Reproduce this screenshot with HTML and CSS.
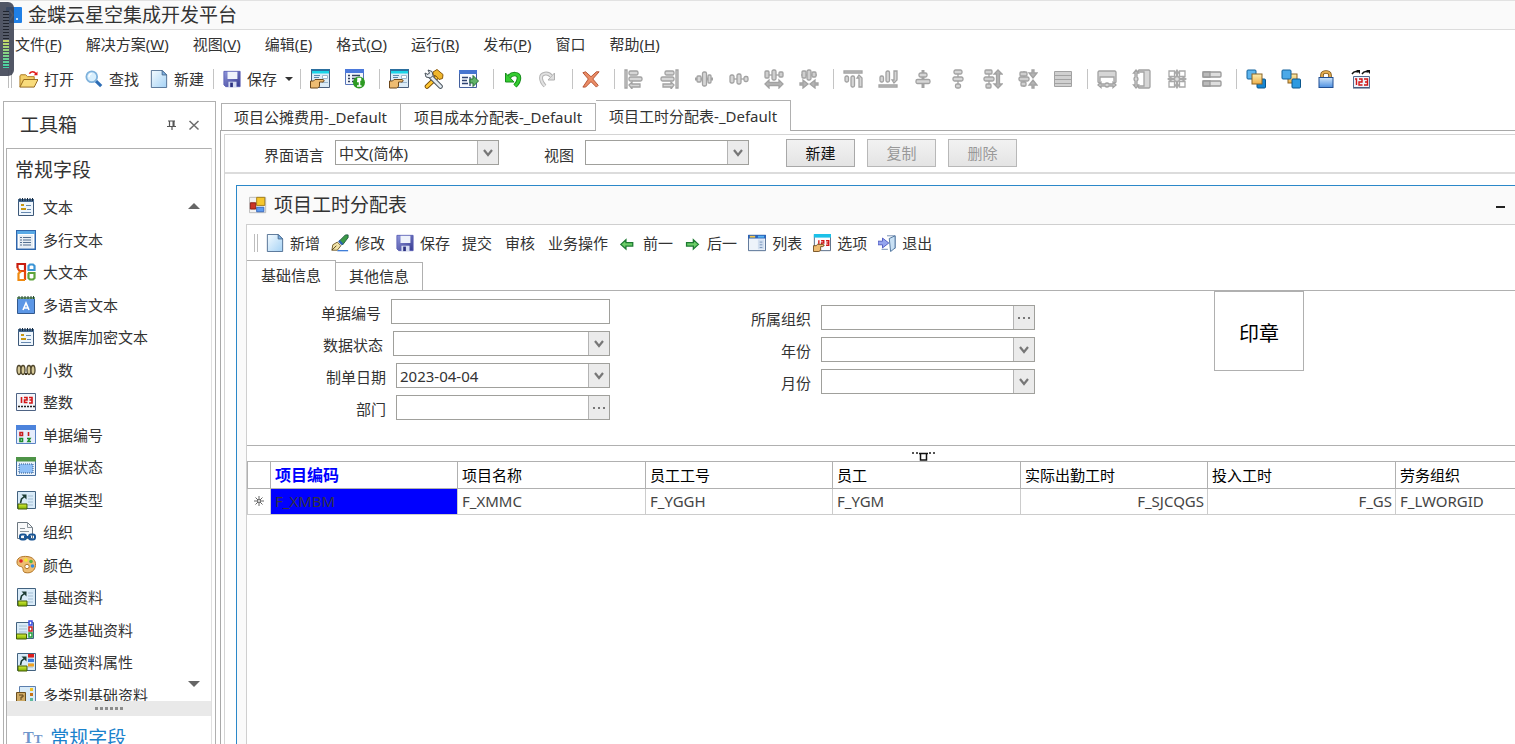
FILE: index.html
```html
<!DOCTYPE html>
<html lang="zh-CN">
<head>
<meta charset="utf-8">
<title>金蝶云星空集成开发平台</title>
<link rel="stylesheet" href="styles.css">
</head>
<body>
<svg class="defs" aria-hidden="true">
  <defs>
    <linearGradient id="gPage" x1="0" y1="0" x2="1" y2="1"><stop offset="0" stop-color="#f4fbff"/><stop offset="1" stop-color="#a5d2f5"/></linearGradient>
    <linearGradient id="gBlue" x1="0" y1="0" x2="0" y2="1"><stop offset="0" stop-color="#cfe6fb"/><stop offset="1" stop-color="#4d8fe0"/></linearGradient>
    <linearGradient id="gSave" x1="0" y1="0" x2="1" y2="1"><stop offset="0" stop-color="#8f96dc"/><stop offset="1" stop-color="#35398f"/></linearGradient>
    <linearGradient id="gGold" x1="0" y1="0" x2="0" y2="1"><stop offset="0" stop-color="#fdeeb0"/><stop offset="1" stop-color="#eeb04a"/></linearGradient>
    <linearGradient id="gLime" x1="0" y1="0" x2="0" y2="1"><stop offset="0" stop-color="#d6ef3c"/><stop offset="1" stop-color="#7fae00"/></linearGradient>
  </defs>
  <symbol id="open" viewBox="0 0 20 20"><path d="M1 18V6l1-1h5l2 2h7v3" fill="#f3cf68" stroke="#a9761c"/><path d="M1 18l4-8h15l-4 8z" fill="#f9dc7c" stroke="#94661a"/><path d="M11 4c1-3 5-3 7 0" fill="none" stroke="#e01818" stroke-width="1.6"/><path d="M15.500 5.500h4V1.500z" fill="#e01818"/></symbol>
  <symbol id="find" viewBox="0 0 20 20"><path d="M12 12l6 6" stroke="#2d6db5" stroke-width="3.500"/><circle cx="7.500" cy="7.500" r="6" fill="#d8effd" stroke="#7fb2dc" stroke-width="2"/><path d="M4.500 8a3.500 3.500 0 0 1 3-4" fill="none" stroke="#fff" stroke-width="1.500"/></symbol>
  <symbol id="new" viewBox="0 0 20 20"><path d="M1.500.500h12l5 5v14h-17z" fill="url(#gPage)" stroke="#48688c"/><path d="M13.500.500v5h5z" fill="#7db4e8" stroke="#48688c"/></symbol>
  <symbol id="save" viewBox="0 0 20 20"><path d="M1 1.500h18v17H3l-2-2z" fill="url(#gSave)" stroke="#5a5fb4"/><path d="M5 2h11v8H5z" fill="#eef2fb"/><path d="M6 13h9v6H6z" fill="#d5dcf2"/><path d="M8 14h3v5H8z" fill="#2c3180"/></symbol>
  <symbol id="formhand" viewBox="0 0 20 20"><path d="M1.500.500h18v18h-18z" fill="#dcecf7" stroke="#4a5f7c"/><path d="M1 0h19v2H1z" fill="#2c6f9e"/><path d="M2 2h17v2.500H2z" fill="#1bd5e8"/><path d="M4 6.500h6M4 8.500h5" stroke="#5d88ad"/><path d="M12.500 6.500h5v3h-5z" fill="#fff" stroke="#9bb8cf"/><path d="M12 13.500h6" stroke="#9bb8cf"/><path d="M.5 12h3l1.500-1.500h8c1.500.5 1.500 2 0 2.500H9.500v4.500l-2 1.500h-7z" fill="#eebc72" stroke="#6d4719"/></symbol>
  <symbol id="forminfo" viewBox="0 0 20 20"><path d="M.5.500h18v15H.5z" fill="#f3f6fc" stroke="#5874b8"/><path d="M0 0h19v4H0z" fill="#4b79dc"/><path d="M3 6.500h2m2 0h8M3 9.500h2m2 0h5M3 12.500h2m2 0h3" stroke="#33415d" stroke-width="1.300"/><circle cx="14" cy="13.500" r="6" fill="#2c9a22"/><path d="M13 9.500h2.500v1.500H13zM12 12.500h2.500v4M12 17h4.500" stroke="#fff" stroke-width="1.500" fill="none"/></symbol>
  <symbol id="tools" viewBox="0 0 20 20"><path d="M3 17.500L14 7" stroke="#7a4f08" stroke-width="4.600" stroke-linecap="round"/><path d="M3 17.500L14 7" stroke="#ffc732" stroke-width="2.800" stroke-linecap="round"/><path d="M9 3l4-2.500 6 5-.5 4-3.500 1L12 7l-3-1z" fill="#efb62c" stroke="#8a5a0c"/><path d="M5.500 6.500l11 11" stroke="#4a535c" stroke-width="4.600" stroke-linecap="round"/><path d="M5.500 6.500l11 11" stroke="#e4ecf2" stroke-width="2.800" stroke-linecap="round"/><path d="M1 4l3 1.500L5.500 4 4 1l4 1.500 1 4L6.500 9 2 8z" fill="#e7edf1" stroke="#4a535c"/></symbol>
  <symbol id="formgo" viewBox="0 0 20 20"><path d="M.5 1.500h17v17H.5z" fill="#f6f9ff" stroke="#425f9d"/><path d="M0 1h18v4H0z" fill="#4675d0"/><path d="M3 8.500h6M3 11.500h5M3 14.500h6M11 8v9" stroke="#2f4372" stroke-width="1.300"/><path d="M11 10h3V6.500l5.500 5.500-5.500 5.500V14h-3z" fill="#62b46a" stroke="#267334"/></symbol>
  <symbol id="undo" viewBox="0 0 20 20"><path d="M6 8c3-4 10-4 10 1 0 3-2 6-4 8" fill="none" stroke="#188c1d" stroke-width="4.500"/><path d="M2.500 4v9H11z" fill="#35cc31" stroke="#188c1d"/><path d="M6 8c3-4 10-4 10 1 0 3-2 6-4 8" fill="none" stroke="#35cc31" stroke-width="2.600"/></symbol>
  <symbol id="redo" viewBox="0 0 20 20"><path d="M13 7C10 3 3 4 3 9c0 3 2 6 4 8" fill="none" stroke="#b3b3b3" stroke-width="3.800"/><path d="M16.500 4v7H10z" fill="#dedede" stroke="#b0b0b0"/><path d="M13 7C10 3 3 4 3 9c0 3 2 6 4 8" fill="none" stroke="#e2e2e2" stroke-width="2"/></symbol>
  <symbol id="del" viewBox="0 0 20 20"><path d="M1 3l3-1 6 5.500L16 2h3l-7 8 6 7-2 2-6-6-6 6H1l6-9z" fill="#ea8d66" stroke="#b04c2c"/></symbol>
  <symbol id="a1" viewBox="0 0 20 20"><g fill="#d6d6d6" stroke="#a2a2a2" stroke-width="1.300"><path d="M1 1h2v18H1z"/><rect x="5" y="2" width="9" height="4" rx="1.500"/><rect x="5" y="8" width="13" height="4" rx="1.500"/><path d="M5 16l3-3v2h8v3H8v2z"/></g></symbol>
  <symbol id="a2" viewBox="0 0 20 20"><use href="#a1" transform="matrix(-1 0 0 1 20 0)" width="20" height="20"/></symbol>
  <symbol id="a3" viewBox="0 0 20 20"><g fill="#d6d6d6" stroke="#a2a2a2" stroke-width="1.300"><path d="M1 10h18" stroke-width="3"/><rect x="3" y="7" width="4" height="6" rx="1"/><rect x="8.500" y="3" width="4" height="14" rx="1.500"/><rect x="14" y="6" width="3" height="8" rx="1"/></g></symbol>
  <symbol id="a4" viewBox="0 0 20 20"><g fill="#d6d6d6" stroke="#a2a2a2" stroke-width="1.300"><path d="M1 10h18"/><rect x="1" y="6" width="4" height="8" rx="1.500"/><rect x="8" y="5" width="4" height="10" rx="1.500"/><rect x="15" y="7.500" width="4" height="5" rx="1.500"/></g></symbol>
  <symbol id="a5" viewBox="0 0 20 20"><g fill="#cfcfcf" stroke="#a2a2a2" stroke-width="1.300"><path d="M1 6h18"/><rect x="1" y="2" width="4" height="7" rx="1"/><rect x="8" y="1" width="4" height="10" rx="1.500"/><rect x="15" y="3" width="4" height="5" rx="1"/><path d="M1 15l4-4v2.500h10V11l4 4-4 4v-2.500H5V19z" fill="#b4b4b4"/></g></symbol>
  <symbol id="a6" viewBox="0 0 20 20"><g fill="#cfcfcf" stroke="#a2a2a2" stroke-width="1.300"><path d="M2 6h16"/><rect x="3" y="2" width="4" height="7" rx="1"/><rect x="8" y="1" width="4" height="10" rx="1.500"/><rect x="13" y="3" width="4" height="5" rx="1"/><path d="M1 14h3v-3l5 4-5 4v-3H1zM19 14h-3v-3l-5 4 5 4v-3h3z" fill="#b4b4b4"/></g></symbol>
  <symbol id="b1" viewBox="0 0 20 20"><g fill="#d6d6d6" stroke="#a2a2a2" stroke-width="1.300"><path d="M1 2h18v2H1z"/><rect x="2" y="7" width="3.500" height="6" rx="1.500"/><rect x="8" y="7" width="3.500" height="11" rx="1.500"/><path d="M14 9l2-3 3 3v9h-3V9z"/></g></symbol>
  <symbol id="b2" viewBox="0 0 20 20"><use href="#b1" transform="matrix(1 0 0 -1 0 20)" width="20" height="20"/></symbol>
  <symbol id="b3" viewBox="0 0 20 20"><g fill="#d6d6d6" stroke="#a2a2a2" stroke-width="1.300"><path d="M10 1v18" stroke-width="3"/><rect x="6" y="4" width="8" height="4" rx="1.500"/><rect x="3" y="10.500" width="14" height="4" rx="1.500"/></g></symbol>
  <symbol id="b4" viewBox="0 0 20 20"><use href="#a4" transform="rotate(90 10 10)" width="20" height="20"/></symbol>
  <symbol id="b5" viewBox="0 0 20 20"><use href="#a5" transform="matrix(0 1 1 0 0 0)" width="20" height="20"/></symbol>
  <symbol id="b6" viewBox="0 0 20 20"><use href="#a6" transform="matrix(0 1 1 0 0 0)" width="20" height="20"/></symbol>
  <symbol id="b7" viewBox="0 0 20 20"><path d="M1.500 2.500h17v15h-17z" fill="#d0d0d0" stroke="#a2a2a2"/><path d="M2 6.500h16M2 10.500h16M2 14.500h16" stroke="#a2a2a2"/></symbol>
  <symbol id="c1" viewBox="0 0 20 20"><g fill="#d6d6d6" stroke="#a2a2a2" stroke-width="1.300"><path d="M2 2h16l1 1v10l-2 2v-7H3v7l-2-2V3z"/><path d="M1 16l3-2.500v1.500h4a2.500 2.500 0 0 1 4 0h4v-1.500l3 2.500-3 2.500V17h-4a2.500 2.500 0 0 1-4 0H4v1.500z"/></g></symbol>
  <symbol id="c2" viewBox="0 0 20 20"><use href="#c1" transform="rotate(90 10 10)" width="20" height="20"/></symbol>
  <symbol id="c3" viewBox="0 0 20 20"><g fill="#fff" stroke="#a8a8a8" stroke-width="1.300"><path d="M2 2h5.500v5.500H2zM12.500 2H18v5.500h-5.500zM2 12.500h5.500V18H2zM12.500 12.500H18V18h-5.500z"/><path d="M3 10h14M10 3v14" stroke-width="2.500"/><path d="M10 1l2 3H8zM10 19l2-3H8zM1 10l3-2v4zM19 10l-3-2v4z" fill="#a8a8a8"/><circle cx="10" cy="10" r="2.500" fill="#ddd"/></g></symbol>
  <symbol id="c4" viewBox="0 0 20 20"><g fill="#dedede" stroke="#999" stroke-width="1.300"><rect x="1" y="3" width="18" height="5" rx="1"/><rect x="1" y="12" width="18" height="5" rx="1"/><path d="M1 3h7v5H1zM1 12h7v5H1z" fill="#bbb"/></g></symbol>
  <symbol id="front" viewBox="0 0 20 20"><rect x="1" y="1" width="9" height="9" rx="1" fill="#5db5ee" stroke="#14629c"/><rect x="11" y="10" width="8.500" height="9" rx="1" fill="#1686d2" stroke="#0b568c"/><rect x="6" y="5" width="10" height="10" fill="url(#gGold)" stroke="#8a6427"/></symbol>
  <symbol id="back" viewBox="0 0 20 20"><rect x="7" y="5" width="9" height="9" fill="url(#gGold)" stroke="#8a6427"/><rect x="1" y="1" width="9" height="9" rx="1" fill="#4ba9e8" stroke="#14629c"/><rect x="11" y="10" width="8.500" height="9" rx="1" fill="#2d9ae0" stroke="#0b568c"/></symbol>
  <symbol id="lock" viewBox="0 0 20 20"><path d="M6 9V6c0-4 8-4 8 0v3" fill="none" stroke="#7c5415" stroke-width="3.600"/><path d="M6 9V6c0-4 8-4 8 0v3" fill="none" stroke="#e3ad51" stroke-width="1.800"/><rect x="3" y="8.500" width="14" height="10" fill="url(#gBlue)" stroke="#214f93"/></symbol>
  <symbol id="num" viewBox="0 0 20 20"><path d="M2.500 7.500h16v11h-16z" fill="#eef3fa" stroke="#526b90"/><path d="M2 19h17" stroke="#3b5070"/><path d="M1 5c2-3 4-3 6-2M11 5c2-3 4-3 6-2" fill="none" stroke="#111" stroke-width="1.500"/><path d="M5 1h4v4zM15 1h4v4z" fill="#111"/><path d="M4 10h1.500v6M8 10h3v3H8v3h3.500M13 10h3.500v6H13M14 13h2" fill="none" stroke="#d01616" stroke-width="1.400"/></symbol>
  <symbol id="notepad" viewBox="0 0 20 20"><path d="M2.500 3.500h15v15h-15z" fill="#eef6fd" stroke="#3d5878"/><path d="M2 2h16v3H2z" fill="#44688f"/><path d="M4 1v3M6.500 1v3M9 1v3M11.500 1v3M14 1v3M16.500 1v3" stroke="#15293f"/><path d="M5 8h3M5 12h5" stroke="#c79712" stroke-width="2"/><path d="M10 8.500h5M11 12.500h4M5 15.500h10" stroke="#6688ae"/></symbol>
  <symbol id="multiline" viewBox="0 0 20 20"><path d="M.75.750h18.500v18.500H.75z" fill="#fff" stroke="#2f66ac" stroke-width="1.500"/><path d="M1 1h18v3H1z" fill="#58a9e6"/><path d="M3 5h14v13H3z" fill="#e8eef4"/><path d="M4 7.500h2m1 0h8M4 10h2m1 0h8M4 12.500h2m1 0h8M4 15h2m1 0h8" stroke="#546f90"/></symbol>
  <symbol id="bigtext" viewBox="0 0 20 20"><g fill="none" stroke-width="2.200"><path d="M1.500 6V2h7.500v6" stroke="#c81e10"/><path d="M1.500 6l2 3H9v9" stroke="#e5490f"/><path d="M5 9.500l-2.500 2V18H9" stroke="#f08a10"/><path d="M12.500 9V4l1.500-1.500h3L18.500 4v4H12" stroke="#3c95d6"/><path d="M12.500 11v5l1.500 1.500h3l1.500-1.500v-5H12" stroke="#5fa43c"/></g></symbol>
  <symbol id="lang" viewBox="0 0 20 20"><path d="M1.500 3.500h17v15h-17z" fill="#5c97e6" stroke="#31588e"/><path d="M1 2h18v2H1z" fill="#6f9e73"/><path d="M3 1v3M6 1v3M9 1v3M12 1v3M15 1v3M17.500 1v3" stroke="#27452e"/><path d="M7 15l3-7 3 7M8 13h4" fill="none" stroke="#fff" stroke-width="1.600"/></symbol>
  <symbol id="decimal" viewBox="0 0 20 20"><g fill="#d5c897" stroke="#50472e" stroke-width="1.300"><ellipse cx="3" cy="10" rx="2" ry="4.500"/><ellipse cx="7" cy="10" rx="2" ry="4.500"/><ellipse cx="13" cy="10" rx="2" ry="4.500"/><ellipse cx="17" cy="10" rx="2" ry="4.500"/></g><path d="M9 13h2v2H9z" fill="#3e3621"/></symbol>
  <symbol id="int" viewBox="0 0 20 20"><path d="M.5 1.500h19v17H.5z" fill="#f3f6fb" stroke="#4e6384"/><path d="M5.500 5v6M8 5.500h3v2.500H8.500v2.500h3M13 5.500h3V11h-3M13.500 8H16" fill="none" stroke="#d21616" stroke-width="1.600"/><path d="M2 14.500h17" stroke="#222" stroke-width="1.500" stroke-dasharray="2 1"/></symbol>
  <symbol id="billno" viewBox="0 0 20 20"><path d="M.5.500h19v18H.5z" fill="#e6edfc" stroke="#5a83c4"/><path d="M0 0h20v5H0z" fill="#4c83dc"/><path d="M4 7.500h2.500v3H4zM12.500 7v4" fill="none" stroke="#c71d1d" stroke-width="1.600"/><path d="M4 13.500h2.500v3H4zM11 13.500h3l-2 3h3" fill="none" stroke="#1c8c2c" stroke-width="1.600"/></symbol>
  <symbol id="status" viewBox="0 0 20 20"><path d="M.5.500h19v18H.5z" fill="#e9f2fb" stroke="#416a9c"/><path d="M0 0h20v4.500H0z" fill="#4e9447"/><path d="M3 7h14v9H3z" fill="#8fc0f8" stroke="#2f5686" stroke-dasharray="1 1"/></symbol>
  <symbol id="basic" viewBox="0 0 20 20"><path d="M1.500 1.500h18v17h-18z" fill="#d9ebf8" stroke="#42627f"/><path d="M12 6h5M12 9h5M12 12h5M12 15h5" stroke="#a3bdd3"/><path d="M4.500 13l1-4 3-2.500" fill="none" stroke="#1c3c33" stroke-width="1.600"/><path d="M5.500 4.500h5v5z" fill="#1c3c33"/><path d="M2 14h9v5H2z" fill="url(#gLime)" stroke="#425c06"/></symbol>
  <symbol id="org" viewBox="0 0 20 20"><path d="M1.500.500h10l5 5v11h-15z" fill="#f8f9fa" stroke="#6c7780"/><path d="M11.500.500v5h5M4 6.500h5M4 9.500h9" fill="none" stroke="#8b949b"/><g fill="none" stroke="#195595" stroke-width="2"><rect x="4" y="12.500" width="6" height="5" rx="2"/><rect x="13" y="12.500" width="6" height="5" rx="2"/><path d="M8 15h7"/></g></symbol>
  <symbol id="color" viewBox="0 0 20 20"><path d="M1 7c0-5 6-6 10-5.500 6 .5 9 4 8.500 9S15 19 9 17.500C6 16.500 8 14 6 12c-1-1-5 0-5-5z" fill="#eebd72" stroke="#b27526"/><circle cx="5" cy="6" r="1.800" fill="#e02424"/><circle cx="10" cy="5" r="1.800" fill="#f6ea28"/><circle cx="15" cy="6.500" r="1.800" fill="#58b63e"/><circle cx="16.500" cy="11" r="1.800" fill="#328ae0"/><circle cx="11" cy="11.500" r="2.200" fill="#fff" stroke="#b27526"/></symbol>
  <symbol id="multi" viewBox="0 0 20 20"><path d="M.5 2.500h17v16H.5z" fill="#d9ebf8" stroke="#42627f"/><path d="M3 6h8M3 9h8M3 12h8" stroke="#a3bdd3"/><path d="M.5 14h10v5H.5z" fill="url(#gLime)" stroke="#425c06"/><g fill="#fff" stroke-width="1.500"><path d="M13 1h3v4h-3z" stroke="#3a4be0"/><path d="M13 7h3v4h-3z" stroke="#d01f1f"/><path d="M13 13h3v4h-3z" stroke="#27a03a"/></g></symbol>
  <symbol id="attr" viewBox="0 0 20 20"><use href="#basic" width="20" height="20"/><path d="M12 2h6v3.500h-6z" fill="#dd1d1d"/><path d="M12 7h6v3h-6z" fill="#3b7be0"/><path d="M12 11.500h6v3h-6z" fill="#f0a322"/></symbol>
  <symbol id="cat" viewBox="0 0 20 20"><path d="M3.500 1.500h16v17h-16z" fill="#d9ebf8" stroke="#5c7fae"/><path d="M14 3h3v3h-3z" fill="#efbf22"/><path d="M14 8h3v3h-3z" fill="#c77218"/><path d="M14 13h3v3h-3z" fill="#5fb99a"/><path d="M.5 7.500h9v11h-9z" fill="#cda964" stroke="#6c5020"/><path d="M3 10h4v2H5v3" fill="none" stroke="#5a431b"/></symbol>
  <symbol id="winform" viewBox="0 0 20 20"><path d="M.5 1.500h18v17H.5z" fill="#f2f2f2" stroke="#b8b8b8"/><path d="M8.500 1.500h9v9h-9z" fill="#f6c62c" stroke="#a27b10"/><path d="M1.500 7.500h6v7h-6z" fill="#cc3426" stroke="#82160e"/><path d="M8.500 12.500h8v5h-8z" fill="#5c9af0" stroke="#3263b8"/></symbol>
  <symbol id="pen" viewBox="0 0 20 20"><path d="M7 18.500h12" stroke="#3f7ed8" stroke-width="1.500"/><path d="M9 8l7-7h3v3l-6 8z" fill="#3b9a46" stroke="#1c5640"/><path d="M9.500 6.500l4 4-1.500 2-4-4z" fill="#2a5fb2"/><path d="M1 18l1-6 5-3 4 4-4 5z" fill="#f2e3a8" stroke="#6c5726"/><path d="M1 18l5-5" stroke="#4b3a15"/></symbol>
  <symbol id="prev" viewBox="0 0 20 20"><path d="M1 11l6-5.500v3.500h8v4H7v3.500z" fill="#6cce68" stroke="#1d7a32" stroke-width="1.500"/></symbol>
  <symbol id="next" viewBox="0 0 20 20"><path d="M17 11l-6-5.500v3.500H3v4h8v3.500z" fill="#6cce68" stroke="#1d7a32" stroke-width="1.500"/></symbol>
  <symbol id="list" viewBox="0 0 20 20"><path d="M.5 1.500h19v17H.5z" fill="#edf3fa" stroke="#47648a"/><path d="M0 1h20v4H0z" fill="#2a62b8"/><path d="M2 2h6v2H2z" fill="#f4c64a"/><path d="M11 2h7v2h-7z" fill="#58b3f2"/><path d="M11 6h7v11h-7z" fill="#d2dff0"/><path d="M13 9h3M13 12h3M13 15h3" stroke="#7693b8"/></symbol>
  <symbol id="opt" viewBox="0 0 20 20"><path d="M1.500.500h18v18h-18z" fill="#fbfcff" stroke="#4a5f7c"/><path d="M1 0h19v4H1z" fill="#1bc0e8"/><path d="M6.500 7v4M9 7.500h3V10h-2.500v2.500h3M14.500 7.500h3v5h-3M15 10h2" fill="none" stroke="#d01616" stroke-width="1.500"/><path d="M.5 13h3l1.500-1.500h6c1.500.5 1.500 2 0 2.500H8.500v4l-2 1.500h-6z" fill="#eebc72" stroke="#6d4719"/></symbol>
  <symbol id="exit" viewBox="0 0 20 20"><path d="M10 2h9v14h-3M4 17h7" fill="none" stroke="#6a86ab"/><path d="M12.500 5L19 2v13.500l-5 4z" fill="#c8e0f4" stroke="#456d98"/><path d="M0 8h5V4.500l7 5.500-7 5.500V12H0z" fill="#94a4ee" stroke="#4956c0"/></symbol>
  <symbol id="chev" viewBox="0 0 12 12"><path d="M2 3l4 5 4-5" fill="none" stroke="#777" stroke-width="2.200"/></symbol>
</svg>

<div class="app">
  <header class="titlebar">
    <svg class="ic16" viewBox="0 0 16 16"><rect width="16" height="16" rx="1" fill="#1f7fe6"/><path d="M4 3l3 5-3 5" fill="none" stroke="#fff" stroke-width="1.500"/><circle cx="11" cy="12" r="1" fill="#fff"/></svg>
    <h1>金蝶云星空集成开发平台</h1>
  </header>
  <div class="meter" aria-hidden="true"><span class="meter-off"></span><span class="meter-on"></span></div>

  <nav class="menu">
    <button>文件(<u>F</u>)</button><button>解决方案(<u>W</u>)</button><button>视图(<u>V</u>)</button><button>编辑(<u>E</u>)</button><button>格式(<u>O</u>)</button><button>运行(<u>R</u>)</button><button>发布(<u>P</u>)</button><button>窗口</button><button>帮助(<u>H</u>)</button>
  </nav>

  <div class="toolbar">
    <span class="grip"></span>
    <div class="group texts files">
      <button><svg class="ic19"><use href="#open"/></svg>打开</button>
      <button><svg class="ic18"><use href="#find"/></svg>查找</button>
      <button><svg class="ic18"><use href="#new"/></svg>新建</button>
    </div>
    <div class="group texts">
      <button><svg class="ic18"><use href="#save"/></svg>保存<span class="caret"></span></button>
    </div>
    <div class="group">
      <button aria-label="表单"><svg class="ic20"><use href="#formhand"/></svg></button>
      <button aria-label="信息"><svg class="ic20"><use href="#forminfo"/></svg></button>
    </div>
    <div class="group">
      <button aria-label="属性"><svg class="ic20"><use href="#formhand"/></svg></button>
      <button aria-label="工具"><svg class="ic20"><use href="#tools"/></svg></button>
      <button aria-label="导出"><svg class="ic20"><use href="#formgo"/></svg></button>
    </div>
    <div class="group">
      <button aria-label="撤销"><svg class="ic20"><use href="#undo"/></svg></button>
      <button aria-label="重做"><svg class="ic20"><use href="#redo"/></svg></button>
    </div>
    <div class="group">
      <button aria-label="删除"><svg class="ic18"><use href="#del"/></svg></button>
    </div>
    <div class="group">
      <button aria-label="左对齐"><svg class="ic20"><use href="#a1"/></svg></button>
      <button aria-label="右对齐"><svg class="ic20"><use href="#a2"/></svg></button>
      <button aria-label="居中"><svg class="ic20"><use href="#a3"/></svg></button>
      <button aria-label="水平间距"><svg class="ic20"><use href="#a4"/></svg></button>
      <button aria-label="增加水平间距"><svg class="ic20"><use href="#a5"/></svg></button>
      <button aria-label="减少水平间距"><svg class="ic20"><use href="#a6"/></svg></button>
    </div>
    <div class="group">
      <button aria-label="顶端对齐"><svg class="ic20"><use href="#b1"/></svg></button>
      <button aria-label="底端对齐"><svg class="ic20"><use href="#b2"/></svg></button>
      <button aria-label="垂直居中"><svg class="ic20"><use href="#b3"/></svg></button>
      <button aria-label="垂直间距"><svg class="ic20"><use href="#b4"/></svg></button>
      <button aria-label="增加垂直间距"><svg class="ic20"><use href="#b5"/></svg></button>
      <button aria-label="减少垂直间距"><svg class="ic20"><use href="#b6"/></svg></button>
      <button aria-label="等行距"><svg class="ic20"><use href="#b7"/></svg></button>
    </div>
    <div class="group">
      <button aria-label="同宽"><svg class="ic20"><use href="#c1"/></svg></button>
      <button aria-label="同高"><svg class="ic20"><use href="#c2"/></svg></button>
      <button aria-label="同大小"><svg class="ic20"><use href="#c3"/></svg></button>
      <button aria-label="标签宽度"><svg class="ic20"><use href="#c4"/></svg></button>
    </div>
    <div class="group">
      <button aria-label="置前"><svg class="ic20"><use href="#front"/></svg></button>
      <button aria-label="置后"><svg class="ic20"><use href="#back"/></svg></button>
      <button aria-label="锁定"><svg class="ic20"><use href="#lock"/></svg></button>
      <button aria-label="顺序"><svg class="ic20"><use href="#num"/></svg></button>
    </div>
  </div>

  <div class="workspace">
    <aside class="sidebar">
      <div class="side-head">
        <h2>工具箱</h2>
        <button aria-label="固定"><svg class="ic12" viewBox="0 0 12 12"><path d="M3.500 2v5M8 2v5M6 7v4M2 2h7M1 7.500h9" fill="none" stroke="#555" stroke-width="1.200"/><path d="M6.500 2H8v5H6.500z" fill="#555"/></svg></button>
        <button aria-label="关闭"><svg class="ic12" viewBox="0 0 12 12"><path d="M1.500 2l9 8.500M10.500 2l-9 8.500" stroke="#6c6c6c" stroke-width="1.500"/></svg></button>
      </div>
      <div class="side-box">
        <h2 class="cat">常规字段</h2>
        <div class="side-scroll">
          <ul>
            <li><svg class="ic20"><use href="#notepad"/></svg>文本</li>
            <li><svg class="ic20"><use href="#multiline"/></svg>多行文本</li>
            <li><svg class="ic20"><use href="#bigtext"/></svg>大文本</li>
            <li><svg class="ic20"><use href="#lang"/></svg>多语言文本</li>
            <li><svg class="ic20"><use href="#notepad"/></svg>数据库加密文本</li>
            <li><svg class="ic20"><use href="#decimal"/></svg>小数</li>
            <li><svg class="ic20"><use href="#int"/></svg>整数</li>
            <li><svg class="ic20"><use href="#billno"/></svg>单据编号</li>
            <li><svg class="ic20"><use href="#status"/></svg>单据状态</li>
            <li><svg class="ic20"><use href="#basic"/></svg>单据类型</li>
            <li><svg class="ic20"><use href="#org"/></svg>组织</li>
            <li><svg class="ic20"><use href="#color"/></svg>颜色</li>
            <li><svg class="ic20"><use href="#basic"/></svg>基础资料</li>
            <li><svg class="ic20"><use href="#multi"/></svg>多选基础资料</li>
            <li><svg class="ic20"><use href="#attr"/></svg>基础资料属性</li>
            <li><svg class="ic20"><use href="#cat"/></svg>多类别基础资料</li>
          </ul>
          <span class="up"></span><span class="down"></span>
        </div>
        <div class="splitter"><i></i><i></i><i></i><i></i><i></i><i></i></div>
        <button class="side-foot"><span class="tt"><b>T</b><small>T</small></span>常规字段</button>
      </div>
    </aside>

    <main class="main">
      <div class="tabs" role="tablist">
        <button role="tab">项目公摊费用-_Default</button><button role="tab">项目成本分配表-_Default</button><button role="tab" class="active" aria-selected="true">项目工时分配表-_Default</button>
      </div>
      <div class="doc">
        <div class="doc-in">
          <div class="langbar">
            <label for="lang-sel">界面语言</label>
            <span class="field w164"><select id="lang-sel"><option>中文(简体)</option></select><span class="btn"><svg class="ic12"><use href="#chev"/></svg></span></span>
            <label for="view-sel" class="second">视图</label>
            <span class="field w164"><select id="view-sel"><option></option></select><span class="btn"><svg class="ic12"><use href="#chev"/></svg></span></span>
            <div class="actions"><button>新建</button><button disabled>复制</button><button disabled>删除</button></div>
          </div>

          <section class="window">
            <div class="win-title"><svg class="ic18"><use href="#winform"/></svg><h2>项目工时分配表</h2><button aria-label="最小化" class="min"><span></span></button></div>
            <div class="win-body">
              <div class="formbar">
                <span class="grip"></span>
                <button><svg class="ic18"><use href="#new"/></svg>新增</button>
                <button><svg class="ic18"><use href="#pen"/></svg>修改</button>
                <button><svg class="ic18"><use href="#save"/></svg>保存</button>
                <button class="plain">提交</button>
                <button class="plain">审核</button>
                <button class="plain">业务操作</button>
                <button><svg class="ic17"><use href="#prev"/></svg>前一</button>
                <button><svg class="ic17"><use href="#next"/></svg>后一</button>
                <button><svg class="ic18"><use href="#list"/></svg>列表</button>
                <button><svg class="ic18"><use href="#opt"/></svg>选项</button>
                <button><svg class="ic18"><use href="#exit"/></svg>退出</button>
              </div>
              <div class="subtabs" role="tablist"><button role="tab" class="active" aria-selected="true">基础信息</button><button role="tab">其他信息</button></div>
              <div class="panel">
                <div class="col left">
                  <div class="row"><label for="f1">单据编号</label><span class="field w219"><input id="f1" type="text"></span></div>
                  <div class="row"><label for="f2">数据状态</label><span class="field w217"><select id="f2"><option></option></select><span class="btn"><svg class="ic12"><use href="#chev"/></svg></span></span></div>
                  <div class="row"><label for="f3">制单日期</label><span class="field w214"><input id="f3" type="text" value="2023-04-04"><button class="btn" aria-label="选择日期"><svg class="ic12"><use href="#chev"/></svg></button></span></div>
                  <div class="row"><label for="f4">部门</label><span class="field w214"><input id="f4" type="text"><button class="btn dots" aria-label="选择部门"><i></i><i></i><i></i></button></span></div>
                </div>
                <div class="col right">
                  <div class="row"><label for="f5">所属组织</label><span class="field w214"><input id="f5" type="text"><button class="btn dots" aria-label="选择组织"><i></i><i></i><i></i></button></span></div>
                  <div class="row"><label for="f6">年份</label><span class="field w214"><select id="f6"><option></option></select><span class="btn"><svg class="ic12"><use href="#chev"/></svg></span></span></div>
                  <div class="row"><label for="f7">月份</label><span class="field w214"><select id="f7"><option></option></select><span class="btn"><svg class="ic12"><use href="#chev"/></svg></span></span></div>
                </div>
                <div class="stamp">印章</div>
              </div>
              <div class="divider"><svg width="24" height="10" viewBox="0 0 24 10"><path d="M1 1h2v2H1zM5 1h2v2H5zM18 1h2v2h-2zM22 1h2v2h-2z" fill="#555"/><path d="M8 2.500h9M9.500 3v6h6V3" fill="none" stroke="#111" stroke-width="1.500"/></svg></div>
              <div class="grid">
                <table>
                  <colgroup><col class="c0"><col class="c2"><col class="c1"><col class="c2"><col class="c1"><col class="c2"><col class="c1"><col class="c1"></colgroup>
                  <thead><tr><th></th><th class="key">项目编码</th><th>项目名称</th><th>员工工号</th><th>员工</th><th>实际出勤工时</th><th>投入工时</th><th>劳务组织</th></tr></thead>
                  <tbody><tr><td class="mark"><svg width="10" height="10" viewBox="0 0 10 10"><path d="M5 0v10M0 5h10M1.500 1.500l7 7M8.500 1.500l-7 7" stroke="#666"/><circle cx="5" cy="5" r="1.500" fill="#fff" stroke="#666"/></svg></td><td class="sel">F_XMBM</td><td>F_XMMC</td><td>F_YGGH</td><td>F_YGM</td><td class="num">F_SJCQGS</td><td class="num">F_GS</td><td>F_LWORGID</td></tr></tbody>
                </table>
              </div>
            </div>
          </section>
        </div>
      </div>
    </main>
  </div>
</div>
</body>
</html>
```

FILE: styles.css
```css
* { box-sizing: border-box; }
body {
  margin: 0;
  background: #fff;
  color: #333;
  font: 15px/20px "Noto Sans", "Noto Sans CJK SC", sans-serif;
  overflow: hidden;
}
button, input, select { font: inherit; color: inherit; margin: 0; }
button { background: none; border: 0; padding: 0; white-space: nowrap; }
h1, h2 { margin: 0; font-size: 19px; font-weight: 400; line-height: 26px; white-space: nowrap; }
svg { display: block; flex: none; }
.defs { position: absolute; width: 0; height: 0; }
.ic12 { width: 12px; height: 12px; }
.ic16 { width: 16px; height: 18px; }
.ic17 { width: 17px; height: 17px; }
.ic18 { width: 18px; height: 18px; }
.ic19 { width: 19px; height: 19px; }
.ic20 { width: 20px; height: 20px; }

.app { display: flex; flex-direction: column; height: 100vh; position: relative; }
.titlebar {
  display: flex; align-items: center; gap: 6px; flex: none;
  height: 30px; padding-left: 6px;
  background: #fafafa; border-top: 1px solid #e2e2e2; border-bottom: 1px solid #dcdcdc;
}
.meter {
  position: absolute; left: 0; top: 2px; z-index: 2;
  display: flex; flex-direction: column;
  width: 14px; height: 74px; padding: 9px 5px 8px 3px;
  background: rgba(62, 68, 84, .9); border-radius: 0 6px 6px 0;
}
.meter-off { flex: 1; background: repeating-linear-gradient(#20242e 0 1px, #555b69 1px 3px); }
.meter-on { flex: 1; background: repeating-linear-gradient(transparent 0 2px, #454b5b 2px 3px), linear-gradient(#c9d865, #3fd0a8); }

.menu { display: flex; align-items: center; gap: 24px; flex: none; height: 30px; padding: 0 0 2px 15px; }

.toolbar { display: flex; align-items: center; flex: none; height: 38px; padding-left: 8px; }
.grip { flex: none; width: 4px; height: 18px; border: solid #bdbdbd; border-width: 0 1px; }
.group { display: flex; flex: none; align-items: center; gap: 15px; height: 20px; padding: 0 14px 0 9px; border-right: 1px solid #c4c4c4; }
.group:last-child { border-right: 0; }
.group button, .formbar button { display: flex; align-items: center; gap: 6px; }
.texts { gap: 11px; padding: 0 7px 0 9px; }
.files { padding: 0 9px 0 7px; }
.caret { border: 4px solid transparent; border-top-color: #333; border-bottom: 0; margin-left: 2px; }

.workspace { display: flex; flex: 1; min-height: 0; }
.sidebar {
  display: flex; flex-direction: column; flex: none;
  width: 213px; margin: 3px 4px 0 3px;
  border: 1px solid #b0b0b0; border-bottom: 0;
}
.side-head { display: flex; align-items: center; gap: 10px; flex: none; height: 46px; padding: 0 15px 0 16px; }
.side-head h2 { flex: 1; }
.side-box { display: flex; flex-direction: column; flex: 1; min-height: 0; margin: 0 3px 0 2px; border: 1px solid #b0b0b0; border-right-color: #e0e0e0; border-bottom: 0; }
.cat { flex: none; padding-left: 8px; line-height: 42px; }
.side-scroll { flex: 1; min-height: 0; overflow: hidden; position: relative; }
.side-scroll ul { display: grid; grid-auto-rows: 1fr; height: 520px; margin: 0; padding: 0 0 0 9px; list-style: none; }
.side-scroll li { display: flex; align-items: center; gap: 7px; }
.up, .down { position: absolute; right: 11px; border: 6px solid transparent; }
.up { top: 12px; border-bottom-color: #666; border-top: 0; }
.down { bottom: 14px; border-top-color: #666; border-bottom: 0; }
.splitter { display: flex; align-items: center; justify-content: center; gap: 2px; flex: none; height: 15px; background: #e9e9e9; }
.splitter i { width: 3px; height: 3px; background: #8c8c8c; }
.side-foot { display: flex; gap: 8px; flex: none; height: 28px; padding-left: 16px; overflow: hidden; color: #1b82cc; font-size: 19px; line-height: 44px; }
.tt { font-family: "Liberation Serif", serif; font-size: 16px; color: #6f96cc; }
.tt b { font-weight: 700; }
.tt small { font-size: 13px; font-weight: 700; }

.main { display: flex; flex-direction: column; flex: 1; min-width: 0; padding-top: 2px; }
.tabs { display: flex; align-items: flex-end; flex: none; height: 30px; padding-left: 1px; }
.tabs button { height: 27px; padding: 0 13px; border: 1px solid #b0b0b0; border-bottom: 0; line-height: 26px; }
.tabs button:first-child { padding-left: 12px; }
.tabs button + button { border-left: 0; }
.tabs .active { position: relative; z-index: 1; height: 31px; margin-bottom: -1px; background: #fff; line-height: 30px; }
.doc { flex: 1; min-height: 0; display: flex; border: solid #a8a8a8; border-width: 1px 0 0 1px; padding: 3px 0 0 3px; }
.doc-in { display: flex; flex-direction: column; flex: 1; min-width: 0; border: solid #d4d4d4; border-width: 1px 0 0 1px; }
.langbar { display: flex; align-items: center; flex: none; height: 39px; padding: 0 0 2px 39px; border-bottom: 2px solid #dcdcdc; }
.langbar label { margin-right: 11px; padding-top: 4px; white-space: nowrap; }
.langbar .second { margin-left: 45px; }
.actions { display: flex; gap: 12px; margin-left: 37px; }
.actions button { width: 69px; height: 28px; border: 1px solid #a8a8a8; background: linear-gradient(#f2f2f2, #e4e4e4); color: #111; }
.actions button:disabled { color: #999; border-color: #b8b8b8; }

.field { display: flex; flex: none; height: 25px; border: 1px solid #a0a09c; background: #fff; }
.field input, .field select { flex: 1; min-width: 0; width: 100%; appearance: none; border: 0; outline: 0; border-radius: 0; background: none; padding: 0 3px; line-height: 22px; }
.btn { display: flex; flex: none; align-items: center; justify-content: center; width: 21px; background: #ebebeb; border-left: 1px solid #b4b4b4; }
.dots { gap: 3px; }
.dots i { width: 2px; height: 2px; background: #777; }
.w164 { width: 164px; }
.w214 { width: 214px; }
.w217 { width: 217px; }
.w219 { width: 219px; }

.window { display: flex; flex-direction: column; flex: 1; min-height: 0; margin: 11px 0 0 11px; border: solid #2b88c9; border-width: 1px 0 0 1px; background: #fafafa; }
.win-title { display: flex; align-items: center; gap: 7px; flex: none; height: 38px; padding-left: 12px; }
.win-title h2 { flex: 1; }
.min { width: 30px; height: 20px; display: flex; align-items: center; justify-content: center; }
.min span { width: 9px; height: 2px; margin-top: 4px; background: #222; }
.win-body { display: flex; flex-direction: column; flex: 1; min-width: 0; margin-left: 9px; border: solid #cfcfcf; border-width: 1px 0 0 1px; background: #fff; }
.formbar { display: flex; align-items: center; gap: 11px; flex: none; height: 36px; padding-left: 7px; }
.formbar .grip { margin-right: -3px; }
.formbar .plain { padding: 0 1px; }
.subtabs { display: flex; align-items: flex-end; flex: none; height: 29px; }
.subtabs button { height: 28px; width: 87px; padding-bottom: 1px; border: 1px solid #b0b0b0; border-width: 1px 1px 0 0; background: #fff; }
.subtabs .active { position: relative; z-index: 1; height: 31px; width: 89px; margin-bottom: -1px; padding-bottom: 2px; }
.panel { display: flex; align-items: flex-start; flex: none; height: 156px; border: solid #b0b0b0; border-width: 1px 0; }
.col { display: flex; flex-direction: column; gap: 7px; }
.row { display: flex; justify-content: flex-end; gap: 10px; }
.row label { padding-top: 4px; white-space: nowrap; }
.left { width: 363px; padding-top: 8px; }
.right { width: 425px; padding-top: 14px; }
.stamp { width: 90px; height: 80px; margin-left: 179px; border: 1px solid #b0b0b0; color: #000; font-size: 20px; line-height: 84px; text-align: center; }
.divider { display: flex; justify-content: center; flex: none; height: 15px; padding: 5px 0 0 84px; }

.grid { flex: 1; min-height: 0; overflow: hidden; }
.grid table { table-layout: fixed; width: 1336px; border-collapse: collapse; }
.c0 { width: 23px; }
.c1 { width: 188px; }
.c2 { width: 187px; }
.grid th, .grid td { height: 27px; padding: 0 3px 1px 4px; border: 1px solid #b0b0b0; text-align: left; line-height: 20px; white-space: nowrap; }
.grid th { color: #000; font-weight: 400; }
.grid td { height: 26px; border-color: #ccc; color: #444; }
.grid .key { color: #00f; font-weight: 700; font-size: 16px; }
.grid .sel { background: #00f; color: #334; }
.grid .num { text-align: right; padding-right: 3px; }
.grid .mark { padding-left: 6px; }
```
